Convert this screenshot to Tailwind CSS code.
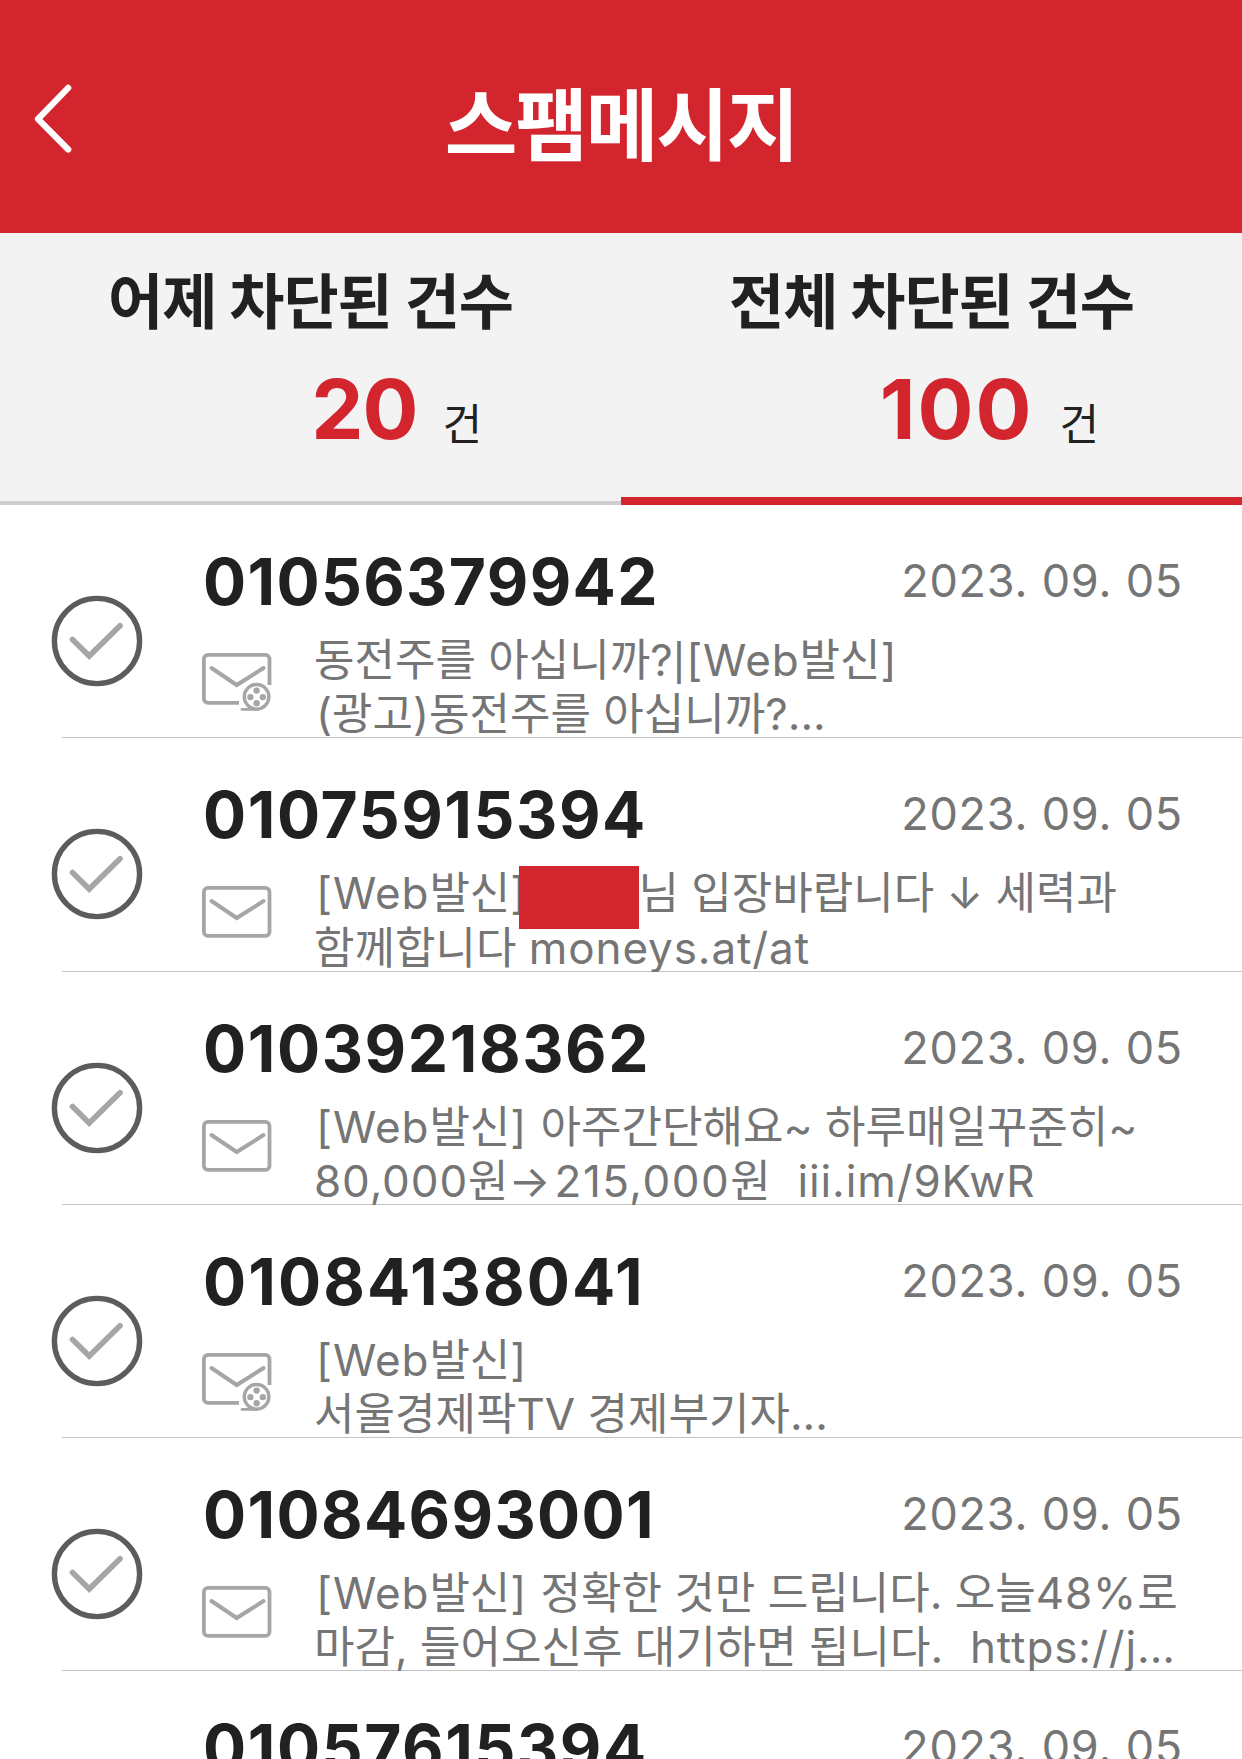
<!DOCTYPE html>
<html lang="ko">
<head>
  <meta charset="UTF-8" />
  <meta name="viewport" content="width=device-width, initial-scale=1.0" />
  <title>스팸메시지</title>
  <script src="https://cdn.jsdelivr.net/npm/@tailwindcss/browser@4"></script>
</head>
<body class="bg-white text-[#212121] font-[Inter,'Noto_Sans_CJK_KR',sans-serif]">
<div class="h-[1759px] overflow-hidden">
  <!-- Icons -->
  <svg class="hidden" xmlns="http://www.w3.org/2000/svg">
    <symbol id="check" viewBox="0 0 92 92">
      <circle cx="46" cy="46" r="42.6" fill="none" stroke="#5c5c5c" stroke-width="5.4" />
      <path d="M21.5 44.5L38.2 61L69 30.8" fill="none" stroke="#a6a6a6" stroke-width="5.6" stroke-linecap="round" />
    </symbol>
    <symbol id="mail" viewBox="0 0 72 64">
      <rect x="1.9" y="1.9" width="65.6" height="48" rx="4" fill="none" stroke="#a6a6a6" stroke-width="3.8" />
      <path d="M9.5 15L34.7 32L61.5 15" fill="none" stroke="#a6a6a6" stroke-width="4" stroke-linecap="round" />
    </symbol>
    <symbol id="mail-video" viewBox="0 0 72 64">
      <path d="M37 49.9H6a4.1 4.1 0 0 1-4.1-4.1V6A4.1 4.1 0 0 1 6 1.9H63.4A4.1 4.1 0 0 1 67.5 6V32" fill="none" stroke="#a6a6a6" stroke-width="3.8" />
      <path d="M9.5 15L34.7 32L61.5 15" fill="none" stroke="#a6a6a6" stroke-width="4" stroke-linecap="round" />
      <circle cx="54.6" cy="43.8" r="14.5" fill="#fff" />
      <circle cx="54.6" cy="43.8" r="12.3" fill="none" stroke="#a6a6a6" stroke-width="3.4" />
      <path d="M40 56.4H54.6" stroke="#a6a6a6" stroke-width="2.8" stroke-linecap="round" />
      <g fill="#a6a6a6">
        <circle cx="54.6" cy="37.6" r="3.2" />
        <circle cx="48.4" cy="44.1" r="3.2" />
        <circle cx="60.8" cy="44.1" r="3.2" />
        <circle cx="54.6" cy="50.2" r="3.2" />
      </g>
    </symbol>
  </svg>

  <!-- Header -->
  <header class="h-[233px] bg-[#d3252e] grid grid-cols-[120px_1fr_120px] items-start">
    <button class="pt-[83px] pl-[33px]" aria-label="뒤로">
      <svg class="w-10 h-[72px]" viewBox="0 0 40 72" fill="none" stroke="#fff" stroke-width="6.2" stroke-linecap="round" stroke-linejoin="round">
        <path d="M35.2 4.9L5 36L35.2 66.5" />
      </svg>
    </button>
    <h1 class="pt-[86px] text-center text-white font-bold text-[79px] leading-[80px] tracking-[-2.2px]">스팸메시지</h1>
  </header>

  <!-- Tabs -->
  <nav class="h-[272px] bg-[#f3f3f3] grid grid-cols-2">
    <div class="pt-[35px] border-b-4 border-[#d0d0d0]">
      <p class="text-center font-bold text-[60px] leading-[68px] tracking-[-1.1px]">어제 차단된 건수</p>
      <p class="pt-[31px] pr-[139px] flex justify-end items-baseline gap-[25px]">
        <span class="text-[#d3252e] font-bold text-[83px] leading-[84px] tracking-[-1px]">20</span>
        <span class="pt-px text-[43px] leading-[60px] relative top-px">건</span>
      </p>
    </div>
    <div class="pt-[35px] border-b-8 border-[#d3252e]">
      <p class="text-center font-bold text-[60px] leading-[68px] tracking-[-1.1px]">전체 차단된 건수</p>
      <p class="pt-[31px] pr-[143px] flex justify-end items-baseline gap-[26px]">
        <span class="text-[#d3252e] font-bold text-[83px] leading-[84px] tracking-[2px]">100</span>
        <span class="pt-px text-[43px] leading-[60px] relative top-px">건</span>
      </p>
    </div>
  </nav>

  <!-- Message list -->
  <ul id="list"></ul>
</div>

  <script>
    const messages = [
      { from: '01056379942', track: 'tracking-[1.35px]', icon: 'mail-video', lines: ['동전주를 아십니까?|[Web발신]', '(광고)동전주를 아십니까?...'] },
      { from: '01075915394', track: 'tracking-[1.6px]', icon: 'mail', lines: ['[Web발신]{name}님 입장바랍니다 ↓ 세력과', '함께합니다 moneys.at/at'] },
      { from: '01039218362', track: 'tracking-[1.6px]', icon: 'mail', lines: ['[Web발신] 아주간단해요~ 하루매일꾸준히~', '80,000원→215,000원\u00a0 iii.im/9KwR'] },
      { from: '01084138041', track: 'tracking-[2.1px]', icon: 'mail-video', lines: ['[Web발신]', '서울경제팍TV 경제부기자...'] },
      { from: '01084693001', track: 'tracking-[1.35px]', icon: 'mail', lines: ['[Web발신] 정확한 것만 드립니다. 오늘48%로', '마감, 들어오신후 대기하면 됩니다.\u00a0 https://j...'] },
      { from: '01057615394', track: 'tracking-[1.6px]', icon: 'mail', lines: ['', ''] },
    ];

    // Latin runs are set a little looser than the Korean text
    const format = text => text
      .replace(/\[Web|\] |215,000|80,000|moneys\.at\/at|iii\.im\/9KwR|48%|https:\/\/j/g, run =>
        `<span class="${run === '215,000' ? 'tracking-[1.5px]' : 'tracking-[0.9px]'}">${run}</span>`)
      .replace('→', '<span class="tracking-[4px]">→</span>')
      .replace('\u00a0', '<span class="tracking-[2px]">\u00a0</span>')
      .replace('|', '<span class="text-[36px] leading-none tracking-[1px] font-medium">|</span>')
      .replace('{name}', '<span class="relative inline-block w-[112px]"><span class="absolute left-[-7px] top-[-43px] w-[120px] h-[63px] bg-[#d3252e]"></span></span>');

    const indent = text => /^[\[(]/.test(text) ? 'pl-[2px]' : '';

    document.getElementById('list').innerHTML = messages.map(m => `
      <li class="h-[233.25px] pl-[62px] overflow-hidden">
        <div class="h-full border-b border-[#c4c4c4] flex items-start">
          <svg class="shrink-0 ml-[-11px] mt-[90px] w-[92px] h-[92px]"><use href="#check" /></svg>
          <div class="ml-[59px] pt-[45px] flex-1">
            <div class="flex justify-between items-start pr-[59px]">
              <strong class="ml-[1px] font-bold text-[64px] leading-[64px] ${m.track}">${m.from}</strong>
              <time class="text-[#757575] text-[45px] leading-[61px] tracking-[0.8px]">2023. 09. 05</time>
            </div>
            <div class="flex items-start pt-[19px]">
              <svg class="shrink-0 mt-[20px] w-[72px] h-[64px]"><use href="#${m.icon}" /></svg>
              <div class="ml-[40px] text-[#757575] text-[44px] leading-[54.4px] whitespace-nowrap">
                <p class="${indent(m.lines[0])}">${format(m.lines[0])}</p>
                <p class="${indent(m.lines[1])}">${format(m.lines[1])}</p>
              </div>
            </div>
          </div>
        </div>
      </li>`).join('');
  </script>
</body>
</html>
